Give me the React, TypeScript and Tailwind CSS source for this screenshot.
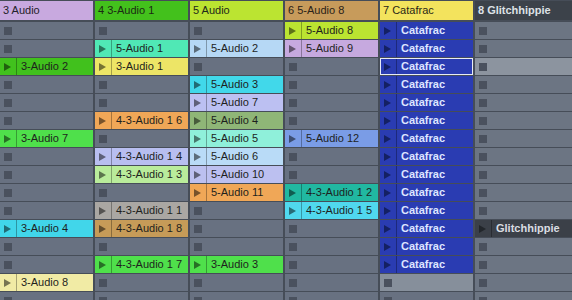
type Clip = { name: string; color: string; text?: string; tri?: string; outline?: boolean }

type Track = {
  title: string
  head: string
  cell: string
  clips: Record<number, Clip>
  light?: Record<number, string>
  grow?: boolean
}

const dark = 'text-[#1e1f1d]'

const cata = (outline = false): Clip => ({
  name: 'Catafrac',
  color: 'bg-[#2a3cb2]',
  text: 'text-[#dfe5ff] font-semibold',
  tri: 'text-[#142063]',
  outline,
})

const tracks: Track[] = [
  {
    title: '3 Audio',
    head: 'bg-[#c8a9df] text-[#24212a]',
    cell: 'bg-[#687181]',
    clips: {
      3: { name: '3-Audio 2', color: 'bg-[#41c11d]' },
      7: { name: '3-Audio 7', color: 'bg-[#4fe04b]' },
      12: { name: '3-Audio 4', color: 'bg-[#41d6ea]' },
      15: { name: '3-Audio 8', color: 'bg-[#f1eba5]' },
    },
  },
  {
    title: '4 3-Audio 1',
    head: 'bg-[#43c11c] text-[#1b2a14]',
    cell: 'bg-[#687181]',
    clips: {
      2: { name: '5-Audio 1', color: 'bg-[#50e8b5]' },
      3: { name: '3-Audio 1', color: 'bg-[#ede566]' },
      6: { name: '4-3-Audio 1 6', color: 'bg-[#f0a757]' },
      8: { name: '4-3-Audio 1 4', color: 'bg-[#b8bef0]' },
      9: { name: '4-3-Audio 1 3', color: 'bg-[#b9ec9b]' },
      11: { name: '4-3-Audio 1 1', color: 'bg-[#aaa7a3]' },
      12: { name: '4-3-Audio 1 8', color: 'bg-[#c69b58]' },
      14: { name: '4-3-Audio 1 7', color: 'bg-[#4fe04b]' },
    },
  },
  {
    title: '5 Audio',
    head: 'bg-[#bbe431] text-[#22281a]',
    cell: 'bg-[#687181]',
    clips: {
      2: { name: '5-Audio 2', color: 'bg-[#b6d8f5]' },
      4: { name: '5-Audio 3', color: 'bg-[#41d8ea]' },
      5: { name: '5-Audio 7', color: 'bg-[#bcc0f2]' },
      6: { name: '5-Audio 4', color: 'bg-[#8fb677]' },
      7: { name: '5-Audio 5', color: 'bg-[#8ff0da]' },
      8: { name: '5-Audio 6', color: 'bg-[#b9dbf7]' },
      9: { name: '5-Audio 10', color: 'bg-[#bcc0f0]' },
      10: { name: '5-Audio 11', color: 'bg-[#f0a757]' },
      14: { name: '3-Audio 3', color: 'bg-[#4fe04b]' },
    },
  },
  {
    title: '6 5-Audio 8',
    head: 'bg-[#c79b5b] text-[#2a2218]',
    cell: 'bg-[#687181]',
    clips: {
      1: { name: '5-Audio 8', color: 'bg-[#bbe431]' },
      2: { name: '5-Audio 9', color: 'bg-[#c6a9df]' },
      7: { name: '5-Audio 12', color: 'bg-[#7a9ce6]' },
      10: { name: '4-3-Audio 1 2', color: 'bg-[#21b8a1]' },
      11: { name: '4-3-Audio 1 5', color: 'bg-[#50d8ee]' },
    },
  },
  {
    title: '7 Catafrac',
    head: 'bg-[#f3e35d] text-[#2a2716]',
    cell: 'bg-[#687181]',
    clips: Object.fromEntries(
      Array.from({ length: 14 }, (_, i) => [i + 1, cata(i + 1 === 3)]),
    ),
    light: { 15: 'bg-[#868f9b]' },
  },
  {
    title: '8 Glitchhippie',
    head: 'bg-[#3c424a] text-[#dde1e6] font-bold',
    cell: 'bg-[#6c7583]',
    clips: {
      12: {
        name: 'Glitchhippie',
        color: 'bg-[#3b4048]',
        text: 'text-[#d9dde2] font-semibold',
        tri: 'text-[#22262b]',
      },
    },
    light: { 3: 'bg-[#8c949f]' },
    grow: true,
  },
]

const rows = Array.from({ length: 16 }, (_, i) => i + 1)

function Play({ className }: { className: string }) {
  return (
    <svg width="7" height="8" viewBox="0 0 7 8" className={className}>
      <polygon points="0,0 7,4 0,8" fill="currentColor" />
    </svg>
  )
}

function Stop() {
  return <div className="ml-1 h-2 w-2 shrink-0 bg-[#4a515e]" />
}

function Cell({ clip, bg }: { clip?: Clip; bg: string }) {
  if (!clip) {
    return (
      <div className={`flex h-[17px] shrink-0 items-center ${bg}`}>
        <Stop />
      </div>
    )
  }
  return (
    <div className={`relative flex h-[17px] shrink-0 items-center ${clip.color}`}>
      <div className="flex h-full w-4 items-center pl-1">
        <Play className={clip.tri ?? 'text-black/50'} />
      </div>
      <div className="h-full w-px bg-black/30" />
      <span className={`pl-1 text-[11px] leading-none whitespace-nowrap ${clip.text ?? dark}`}>
        {clip.name}
      </span>
      {clip.outline && <div className="absolute inset-0 border border-[#e8ebf5]" />}
    </div>
  )
}

export default function App() {
  return (
    <div
      className="flex h-[300px] w-[572px] gap-[2px] overflow-hidden bg-[#464d58] pt-px"
      style={{ fontFamily: '"Liberation Sans", Arial, sans-serif' }}
    >
      {tracks.map((t) => (
        <div key={t.title} className={`flex flex-col gap-px ${t.grow ? 'flex-1' : 'w-[93px] shrink-0'}`}>
          <div className={`flex h-[19px] shrink-0 items-center pl-[3px] text-[11px] whitespace-nowrap ${t.head}`}>
            {t.title}
          </div>
          <div className="h-0" />
          {rows.map((r) => (
            <Cell key={r} clip={t.clips[r]} bg={t.light?.[r] ?? t.cell} />
          ))}
        </div>
      ))}
    </div>
  )
}
